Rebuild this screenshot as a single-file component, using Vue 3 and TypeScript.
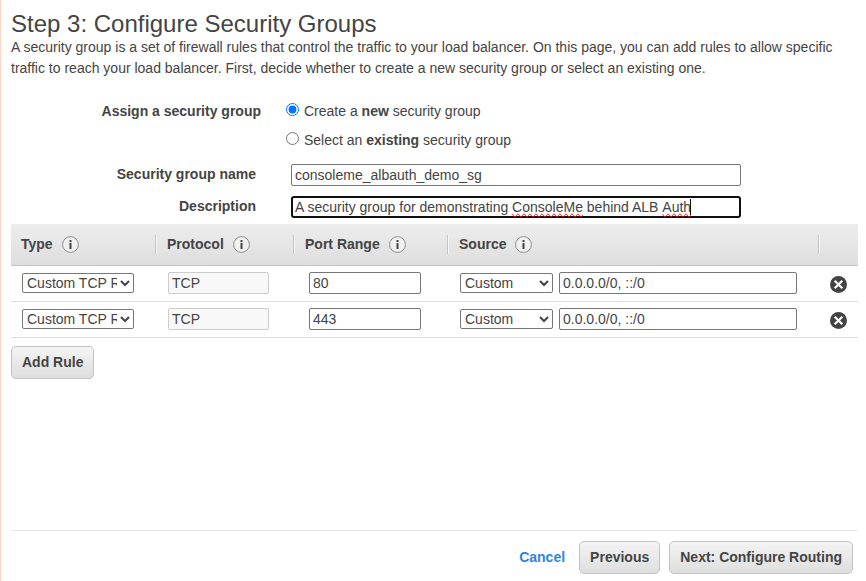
<script setup lang="ts">
import { ref } from 'vue'

interface Rule {
  id: number
  type: string
  protocol: string
  port: string
  source: string
  cidr: string
}

const columns: string[] = ['Type', 'Protocol', 'Port Range', 'Source']
const mode = ref<'new' | 'existing'>('new')
const groupName = ref('consoleme_albauth_demo_sg')
const rules = ref<Rule[]>([
  { id: 1, type: 'Custom TCP Rule', protocol: 'TCP', port: '80', source: 'Custom', cidr: '0.0.0.0/0, ::/0' },
  { id: 2, type: 'Custom TCP Rule', protocol: 'TCP', port: '443', source: 'Custom', cidr: '0.0.0.0/0, ::/0' },
])

function addRule(): void {
  rules.value.push({ id: Date.now(), type: 'Custom TCP Rule', protocol: 'TCP', port: '', source: 'Custom', cidr: '' })
}

function removeRule(id: number): void {
  rules.value = rules.value.filter((r) => r.id !== id)
}
</script>

<template>
  <main class="page">
    <h1>Step 3: Configure Security Groups</h1>
    <p class="intro">
      A security group is a set of firewall rules that control the traffic to your load balancer. On this page, you can
      add rules to allow specific traffic to reach your load balancer. First, decide whether to create a new security
      group or select an existing one.
    </p>

    <section class="form">
      <div class="row assign">
        <span class="label">Assign a security group</span>
        <div class="options">
          <label><input v-model="mode" type="radio" value="new" /><span>Create a <b>new</b> security group</span></label>
          <label><input v-model="mode" type="radio" value="existing" /><span>Select an <b>existing</b> security group</span></label>
        </div>
      </div>
      <div class="row field">
        <span class="label">Security group name</span>
        <input v-model="groupName" class="text" type="text" />
      </div>
      <div class="row field last">
        <span class="label">Description</span>
        <div class="text focused">A security group for demonstrating <span class="typo">ConsoleMe</span> behind ALB <span class="typo">Auth</span><i class="caret"></i></div>
      </div>
    </section>

    <section class="rules">
      <div class="cols head">
        <div v-for="c in columns" :key="c" class="th">
          <span>{{ c }}</span>
          <svg class="info" width="17" height="17" viewBox="0 0 17 17">
            <circle cx="8.5" cy="8.5" r="7.9" fill="#f1f1f1" stroke="#8c8c8c" stroke-width="1" />
            <path d="M7.5 4h2v2h-2zM7.5 7h2v6h-2z" fill="#444" />
          </svg>
        </div>
        <div class="th"></div>
      </div>
      <div v-for="r in rules" :key="r.id" class="cols rule">
        <div><select v-model="r.type" class="type"><option>Custom TCP Rule</option></select></div>
        <div><input v-model="r.protocol" class="text protocol" type="text" disabled /></div>
        <div><input v-model="r.port" class="text port" type="text" /></div>
        <div class="source">
          <select v-model="r.source"><option>Custom</option></select>
          <input v-model="r.cidr" class="text" type="text" />
        </div>
        <div class="remove" @click="removeRule(r.id)">
          <svg width="17" height="17" viewBox="0 0 17 17">
            <circle cx="8.5" cy="8.5" r="8.5" fill="#444" />
            <path d="M4.7 4.7l7.6 7.6M12.3 4.7l-7.6 7.6" stroke="#fff" stroke-width="2.2" />
          </svg>
        </div>
      </div>
    </section>

    <button class="btn add" type="button" @click="addRule">Add Rule</button>

    <footer>
      <a class="cancel">Cancel</a>
      <button class="btn" type="button">Previous</button>
      <button class="btn" type="button">Next: Configure Routing</button>
    </footer>
  </main>
</template>

<style>
body {
  background: #fff;
}
</style>

<style scoped>
* {
  box-sizing: border-box;
}
.page {
  display: flex;
  flex-direction: column;
  height: 581px;
  padding: 10px 8px 0 10px;
  border-left: 1px solid #fdd6c6;
  overflow: hidden;
  font: 14px/21px 'Liberation Sans', Arial, sans-serif;
  color: #444;
}
h1 {
  margin: 0;
  font-size: 24px;
  line-height: 27px;
  font-weight: 400;
}
.intro {
  margin: 0;
}
.row {
  display: flex;
}
.assign {
  height: 85px;
  padding-top: 21px;
}
.label {
  width: 245px;
  font-weight: 700;
  text-align: right;
}
.assign .label {
  width: 250px;
  line-height: 22px;
}
.options {
  margin-left: 25px;
}
.options label {
  display: flex;
  height: 29px;
  line-height: 22px;
}
.options input {
  width: 13px;
  height: 13px;
  margin: 3px 5px 0 0;
}
.field {
  height: 32px;
}
.field.last {
  height: 28px;
}
.field .label {
  line-height: 20px;
}
.text,
select {
  font: 14px 'Liberation Sans', Arial, sans-serif;
  color: #444;
  border: 1px solid #767676;
  border-radius: 2px;
  background: #fff;
}
.text {
  height: 22px;
  padding: 1px 3px;
}
.field .text {
  width: 450px;
  margin-left: 35px;
}
.focused {
  display: flex;
  padding: 0 2px;
  border: 2px solid #101010;
  border-radius: 3px;
  line-height: 18px;
  white-space: pre;
}
.typo {
  text-decoration-line: spelling-error;
}
.caret {
  width: 1px;
  height: 16px;
  margin: 1px 0 0 -1px;
  background: #111;
}
.cols {
  display: grid;
  grid-template-columns: 145px 138px 154px 371px 39px;
}
.head {
  height: 42px;
  align-items: center;
  border-bottom: 1px solid #c4c4c4;
  background: linear-gradient(#ededed, #dedede);
}
.th {
  display: flex;
  align-items: center;
  gap: 9px;
  height: 19px;
  padding: 0 0 0 10px;
  border-right: 1px solid #c4c4c4;
  box-shadow: 1px 0 #f6f6f6;
  font-weight: 700;
}
.th:last-child {
  border: 0;
  box-shadow: none;
}
.th + .th {
  padding-left: 11px;
}
.info {
  flex: none;
}
.rule {
  height: 36px;
  align-items: center;
  padding-bottom: 2px;
  border-bottom: 1px solid #ddd;
}
.rule > div {
  display: flex;
  align-items: center;
  padding-left: 12px;
}
.rule > div:first-child {
  padding-left: 11px;
}
.rule > div:nth-child(3) {
  padding-left: 15px;
}
select {
  height: 20px;
  padding: 0;
}
.type,
.port {
  width: 112px;
}
.protocol {
  width: 101px;
  border-color: #ccc;
  background: #f8f8f8;
}
.source {
  gap: 6px;
}
.source select {
  width: 93px;
}
.source .text {
  width: 238px;
}
.remove {
  padding-top: 3px;
}
.remove svg {
  margin-left: -1px;
}
.btn {
  height: 33px;
  padding: 0 10px 2px;
  border: 1px solid #c3c3c3;
  border-radius: 5px;
  background: linear-gradient(#f4f4f4, #dedede);
  font: 700 14px 'Liberation Sans', Arial, sans-serif;
  color: #444;
}
.add {
  align-self: flex-start;
  margin-top: 8px;
}
footer {
  display: flex;
  justify-content: flex-end;
  align-items: center;
  height: 51px;
  margin-top: auto;
  padding: 3px 5px 0 0;
  border-top: 1px solid #e6e6e6;
}
.cancel {
  margin-right: 14px;
  font-weight: 700;
  color: #2e86de;
}
footer .btn + .btn {
  margin-left: 9px;
}
</style>
